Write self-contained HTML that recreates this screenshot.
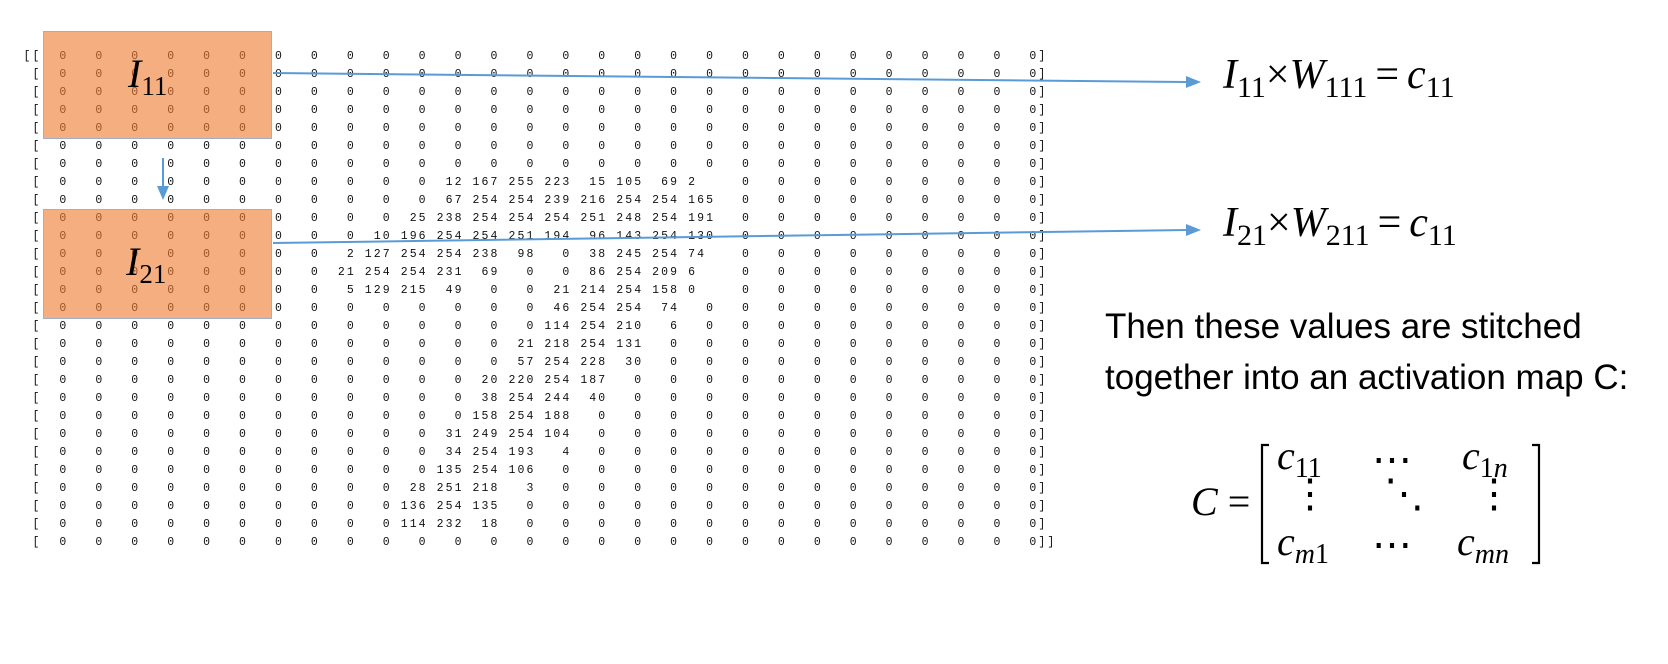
<!DOCTYPE html>
<html><head><meta charset="utf-8"><style>
body{margin:0;width:1668px;height:664px;background:#fff;position:relative;overflow:hidden;font-family:"Liberation Sans",sans-serif}
#m{position:absolute;left:23.5px;top:48px;margin:0;font-family:"Liberation Mono",monospace;font-size:11.5px;letter-spacing:2.08px;line-height:18px;color:#111;white-space:pre}
.box{position:absolute;left:43px;width:229px;background:rgba(237,125,49,0.62);border:1.5px solid #9fb0c8;box-sizing:border-box}
.lab{position:absolute;font-family:"Liberation Serif",serif;font-style:italic;font-size:40px;color:#000}
.lab sub{font-style:normal;font-size:27px;vertical-align:-8px}
.eq{position:absolute;font-family:"Liberation Serif",serif;font-size:42px;color:#000;white-space:nowrap}
.eq sub{font-style:normal;font-size:30px;vertical-align:-9px}
.eq .s{margin:0 8px}
.t{position:absolute;left:1105px;font-size:35px;color:#000;white-space:nowrap}
.cm{position:absolute;font-family:"Liberation Serif",serif;font-size:40px;color:#000;white-space:nowrap}
.cm sub{font-size:28px;vertical-align:-8px}
</style></head><body>
<pre id="m">[[  0   0   0   0   0   0   0   0   0   0   0   0   0   0   0   0   0   0   0   0   0   0   0   0   0   0   0   0]
 [  0   0   0   0   0   0   0   0   0   0   0   0   0   0   0   0   0   0   0   0   0   0   0   0   0   0   0   0]
 [  0   0   0   0   0   0   0   0   0   0   0   0   0   0   0   0   0   0   0   0   0   0   0   0   0   0   0   0]
 [  0   0   0   0   0   0   0   0   0   0   0   0   0   0   0   0   0   0   0   0   0   0   0   0   0   0   0   0]
 [  0   0   0   0   0   0   0   0   0   0   0   0   0   0   0   0   0   0   0   0   0   0   0   0   0   0   0   0]
 [  0   0   0   0   0   0   0   0   0   0   0   0   0   0   0   0   0   0   0   0   0   0   0   0   0   0   0   0]
 [  0   0   0   0   0   0   0   0   0   0   0   0   0   0   0   0   0   0   0   0   0   0   0   0   0   0   0   0]
 [  0   0   0   0   0   0   0   0   0   0   0  12 167 255 223  15 105  69 2     0   0   0   0   0   0   0   0   0]
 [  0   0   0   0   0   0   0   0   0   0   0  67 254 254 239 216 254 254 165   0   0   0   0   0   0   0   0   0]
 [  0   0   0   0   0   0   0   0   0   0  25 238 254 254 254 251 248 254 191   0   0   0   0   0   0   0   0   0]
 [  0   0   0   0   0   0   0   0   0  10 196 254 254 251 194  96 143 254 130   0   0   0   0   0   0   0   0   0]
 [  0   0   0   0   0   0   0   0   2 127 254 254 238  98   0  38 245 254 74    0   0   0   0   0   0   0   0   0]
 [  0   0   0   0   0   0   0   0  21 254 254 231  69   0   0  86 254 209 6     0   0   0   0   0   0   0   0   0]
 [  0   0   0   0   0   0   0   0   5 129 215  49   0   0  21 214 254 158 0     0   0   0   0   0   0   0   0   0]
 [  0   0   0   0   0   0   0   0   0   0   0   0   0   0  46 254 254  74   0   0   0   0   0   0   0   0   0   0]
 [  0   0   0   0   0   0   0   0   0   0   0   0   0   0 114 254 210   6   0   0   0   0   0   0   0   0   0   0]
 [  0   0   0   0   0   0   0   0   0   0   0   0   0  21 218 254 131   0   0   0   0   0   0   0   0   0   0   0]
 [  0   0   0   0   0   0   0   0   0   0   0   0   0  57 254 228  30   0   0   0   0   0   0   0   0   0   0   0]
 [  0   0   0   0   0   0   0   0   0   0   0   0  20 220 254 187   0   0   0   0   0   0   0   0   0   0   0   0]
 [  0   0   0   0   0   0   0   0   0   0   0   0  38 254 244  40   0   0   0   0   0   0   0   0   0   0   0   0]
 [  0   0   0   0   0   0   0   0   0   0   0   0 158 254 188   0   0   0   0   0   0   0   0   0   0   0   0   0]
 [  0   0   0   0   0   0   0   0   0   0   0  31 249 254 104   0   0   0   0   0   0   0   0   0   0   0   0   0]
 [  0   0   0   0   0   0   0   0   0   0   0  34 254 193   4   0   0   0   0   0   0   0   0   0   0   0   0   0]
 [  0   0   0   0   0   0   0   0   0   0   0 135 254 106   0   0   0   0   0   0   0   0   0   0   0   0   0   0]
 [  0   0   0   0   0   0   0   0   0   0  28 251 218   3   0   0   0   0   0   0   0   0   0   0   0   0   0   0]
 [  0   0   0   0   0   0   0   0   0   0 136 254 135   0   0   0   0   0   0   0   0   0   0   0   0   0   0   0]
 [  0   0   0   0   0   0   0   0   0   0 114 232  18   0   0   0   0   0   0   0   0   0   0   0   0   0   0   0]
 [  0   0   0   0   0   0   0   0   0   0   0   0   0   0   0   0   0   0   0   0   0   0   0   0   0   0   0   0]]</pre>
<div class="box" style="top:31px;height:108px"></div>
<div class="box" style="top:209px;height:110px"></div>
<div class="lab" style="left:128px;top:50px">I<sub>11</sub></div>
<div class="lab" style="left:126px;top:238px">I<sub>21</sub></div>
<svg width="1668" height="664" style="position:absolute;left:0;top:0">
<g stroke="#5b9bd5" stroke-width="2" fill="#5b9bd5">
<line x1="273" y1="73" x2="1187" y2="82"/>
<polygon points="1201,82 1186,76 1186,88" stroke="none"/>
<line x1="273" y1="243" x2="1187" y2="230"/>
<polygon points="1201,230 1186,224 1186,236" stroke="none"/>
<line x1="163" y1="158" x2="163" y2="188"/>
<polygon points="163,200 157,186 169,186" stroke="none"/>
</g>
<g stroke="#000" stroke-width="2.2" fill="none">
<polyline points="1269,445 1262,445 1262,563 1269,563"/>
<polyline points="1532,445 1539,445 1539,563 1532,563"/>
</g>
</svg>
<div class="eq" style="left:1223px;top:51px"><i>I</i><sub>11</sub>×<i>W</i><sub>111</sub><span class="s">=</span><i>c</i><sub>11</sub></div>
<div class="eq" style="left:1223px;top:199px"><i>I</i><sub>21</sub>×<i>W</i><sub>211</sub><span class="s">=</span><i>c</i><sub>11</sub></div>
<div class="t" style="top:307px">Then these values are stitched</div>
<div class="t" style="top:358px">together into an activation map C:</div>
<div class="cm" style="left:1191px;top:478px"><i>C</i> =</div>
<div class="cm" style="left:1277px;top:432px"><i>c</i><sub>11</sub></div>
<div class="cm" style="left:1372px;top:436px">⋯</div>
<div class="cm" style="left:1462px;top:432px"><i>c</i><sub>1<i>n</i></sub></div>
<div class="cm" style="left:1290px;top:470px">⋮</div>
<div class="cm" style="left:1384px;top:470px">⋱</div>
<div class="cm" style="left:1474px;top:470px">⋮</div>
<div class="cm" style="left:1277px;top:518px"><i>c</i><sub><i>m</i>1</sub></div>
<div class="cm" style="left:1372px;top:521px">⋯</div>
<div class="cm" style="left:1457px;top:518px"><i>c</i><sub><i>mn</i></sub></div>
</body></html>
